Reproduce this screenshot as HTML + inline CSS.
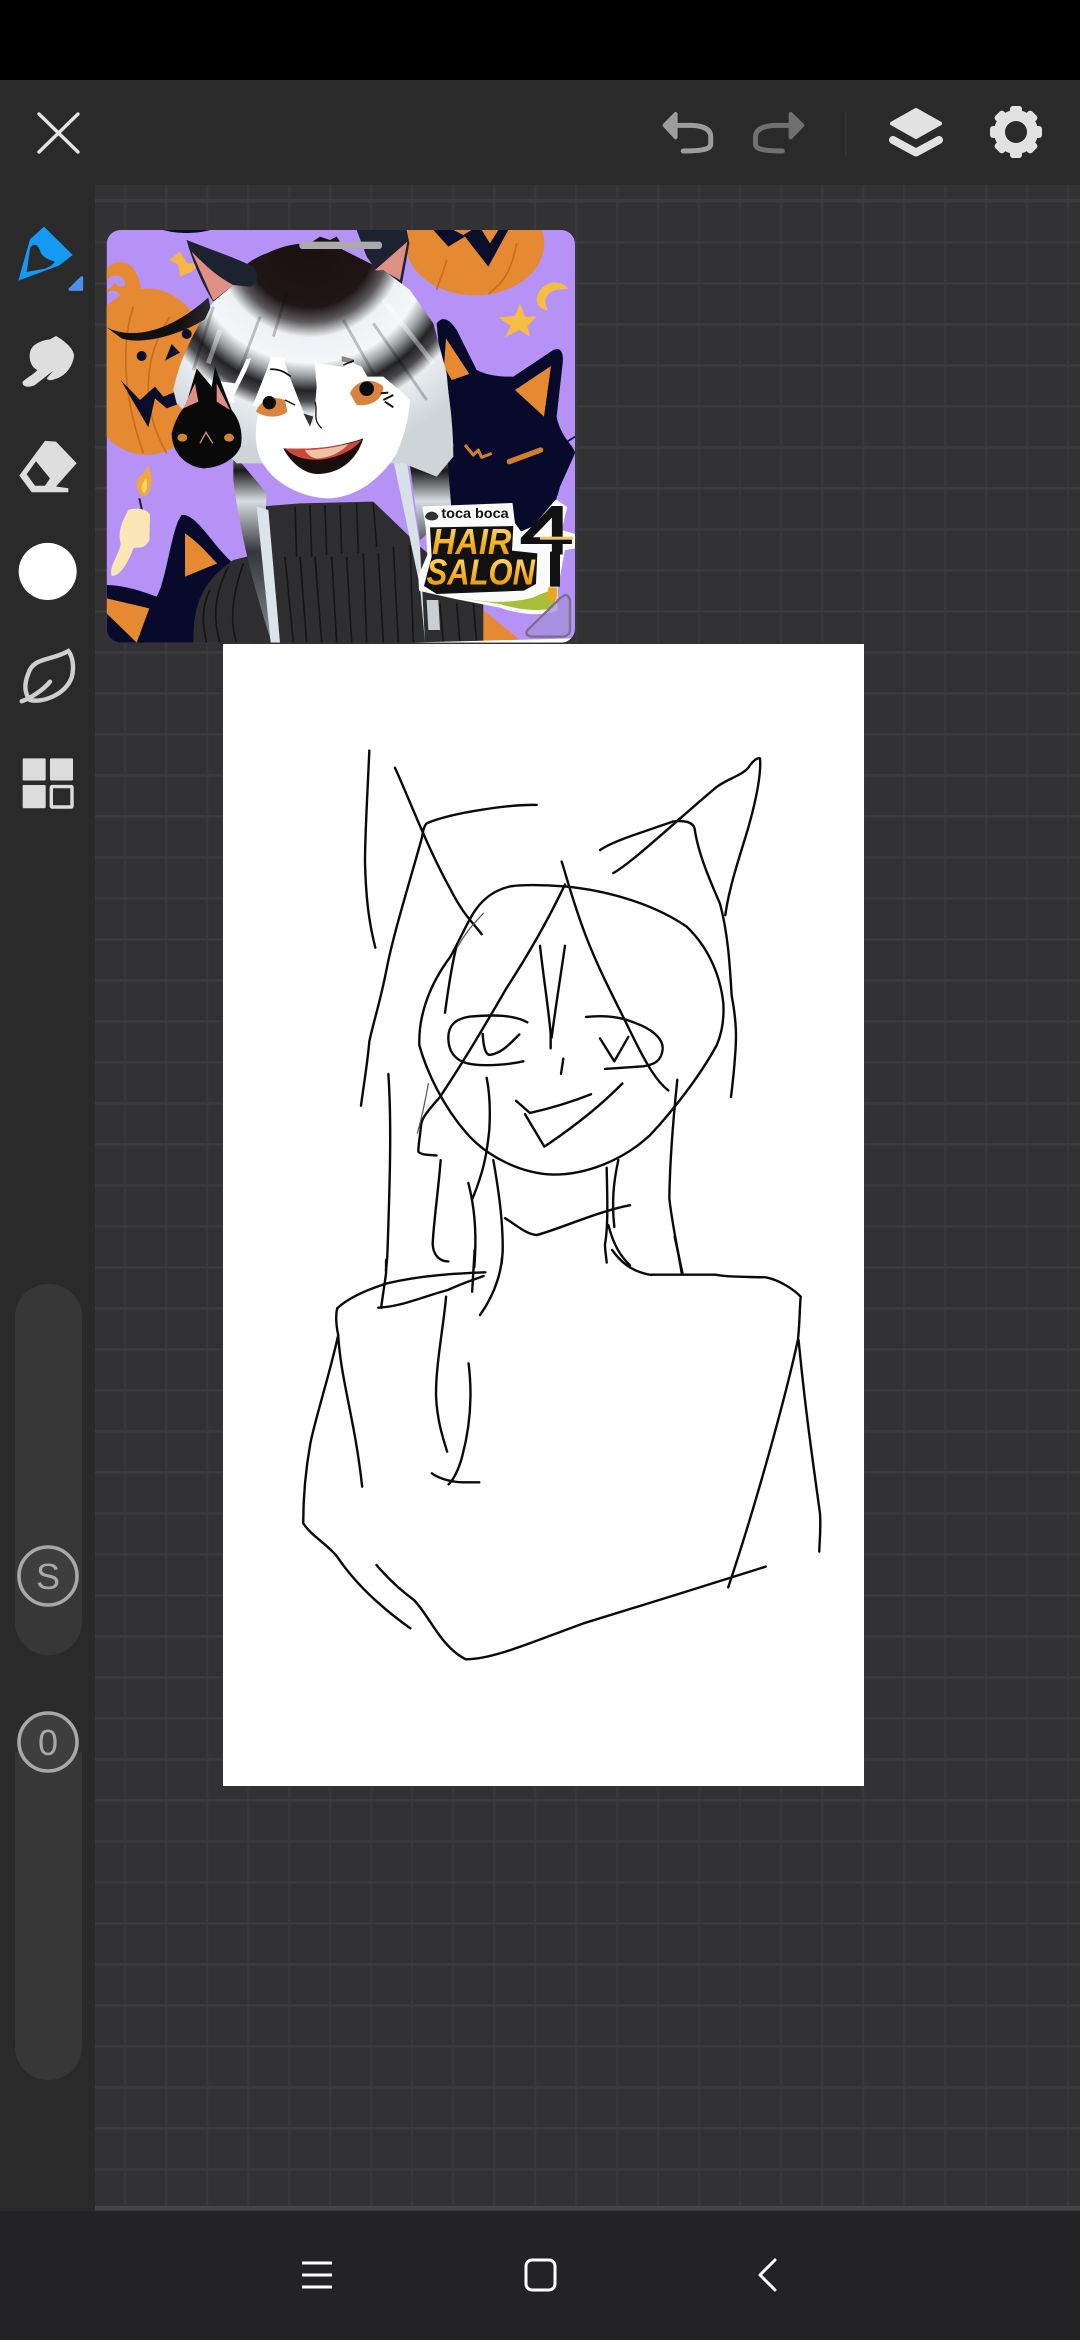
<!DOCTYPE html>
<html lang="en">
<head>
<meta charset="utf-8">
<title>Drawing canvas</title>
<style>
html,body{margin:0;padding:0;background:#000;width:1080px;height:2340px;overflow:hidden}
svg{display:block}
.s{fill:none;stroke:#0a0a0a;stroke-width:2.4;stroke-linecap:round;stroke-linejoin:round;vector-effect:non-scaling-stroke}
.t{fill:none;stroke:#555;stroke-width:1.2;stroke-linecap:round;vector-effect:non-scaling-stroke}
.ui{vector-effect:non-scaling-stroke}
</style>
</head>
<body>
<svg width="1080" height="2340" viewBox="0 0 1080 2340" xmlns="http://www.w3.org/2000/svg">
<defs>
<pattern id="grid" x="124" y="200" width="41" height="41" patternUnits="userSpaceOnUse">
<rect x="-1" y="-1" width="43" height="43" fill="#323133"/>
<rect x="0" y="0" width="2.4" height="41" fill="#38373a"/>
<rect x="0" y="0" width="41" height="2.6" fill="#3b3a3c"/>
</pattern>
<clipPath id="thumb"><rect x="20" y="30" width="1405" height="1238" rx="42"/></clipPath>
<radialGradient id="hr" gradientUnits="userSpaceOnUse" cx="420" cy="40" r="640">
<stop offset="0" stop-color="#1a1012"/><stop offset=".30" stop-color="#1f1517"/><stop offset=".37" stop-color="#5c5a5c"/><stop offset=".44" stop-color="#eef2f5"/><stop offset=".56" stop-color="#f4f7fa"/><stop offset=".62" stop-color="#9fa2a5"/><stop offset=".69" stop-color="#232325"/><stop offset=".74" stop-color="#4a4a4c"/><stop offset=".80" stop-color="#e8edf0"/><stop offset="1" stop-color="#cfd4d8"/>
</radialGradient>
<linearGradient id="hg2" gradientUnits="userSpaceOnUse" x1="0" y1="660" x2="0" y2="1270">
<stop offset="0" stop-color="#d9dde0"/><stop offset=".15" stop-color="#1a1a1a"/><stop offset=".3" stop-color="#d7dde2"/><stop offset=".55" stop-color="#33363a"/><stop offset="1" stop-color="#888c90"/>
</linearGradient>
<linearGradient id="rb" gradientUnits="userSpaceOnUse" x1="30" y1="0" x2="340" y2="0">
<stop offset="0" stop-color="#111"/><stop offset=".4" stop-color="#333"/><stop offset=".55" stop-color="#ddd"/><stop offset=".75" stop-color="#222"/><stop offset="1" stop-color="#999"/>
</linearGradient>
<linearGradient id="yl" x1="0" y1="0" x2="0" y2="1">
<stop offset="0" stop-color="#ffe38a"/><stop offset=".55" stop-color="#f6b21f"/><stop offset="1" stop-color="#df8a12"/>
</linearGradient>
</defs>

<!-- base -->
<rect width="1080" height="80" fill="#000"/>
<rect y="80" width="1080" height="2131" fill="#2a2a2b"/>
<rect x="95" y="185" width="985" height="2026" fill="url(#grid)"/>
<rect x="95" y="199" width="985" height="3" fill="#3d3c3e"/>
<rect x="95" y="2206" width="985" height="4" fill="#454446"/>
<rect y="2211" width="1080" height="129" fill="#232225"/>

<!-- top bar icons -->
<path d="M39,114 L78,152 M78,114 L39,152" fill="none" stroke="#e4e4e4" stroke-width="3.4" stroke-linecap="round"/>
<g transform="scale(.6887,.3333)">
<path d="M981,342 L965,376 L981,412 Z" fill="#9c9c9c" stroke="#9c9c9c" stroke-width="4" stroke-linejoin="round" class="ui"/>
<path d="M982,376 L1005,376 C1025,378 1032,392 1032,410 L1032,432 C1032,448 1020,453 992,453" fill="none" stroke="#9c9c9c" stroke-width="5" stroke-linecap="round" class="ui"/>
<path d="M1148,342 L1165,376 L1148,412 Z" fill="#707070" stroke="#707070" stroke-width="4" stroke-linejoin="round" class="ui"/>
<path d="M1148,376 L1125,376 C1105,378 1097,392 1097,410 L1097,432 C1097,448 1110,453 1136,453" fill="none" stroke="#707070" stroke-width="5" stroke-linecap="round" class="ui"/>
</g>
<rect x="845" y="112" width="1.6" height="44" fill="#353535"/>
<path d="M916,110 L940,123.5 L916,137 L892,123.5 Z" fill="#e2e2e2" stroke="#e2e2e2" stroke-width="4" stroke-linejoin="round"/>
<path d="M893,140 L916,152.5 L939,140" fill="none" stroke="#e2e2e2" stroke-width="8" stroke-linecap="round" stroke-linejoin="round"/>
<g transform="translate(1016,132)" fill="#e2e2e2">
<circle r="16.5" fill="none" stroke="#e2e2e2" stroke-width="11"/>
<rect x="-6" y="-26" width="12" height="52" rx="3"/>
<rect x="-6" y="-26" width="12" height="52" rx="3" transform="rotate(45)"/>
<rect x="-6" y="-26" width="12" height="52" rx="3" transform="rotate(90)"/>
<rect x="-6" y="-26" width="12" height="52" rx="3" transform="rotate(135)"/>
<circle r="11" fill="#2a2a2b"/>
</g>

<!-- sidebar tools: pen + smudge -->
<g transform="translate(0,210) scale(.33333)">
<path d="M55,212 L90,88 L132,50 L218,135 L178,166 Z" fill="#1699f2"/>
<path d="M80,186 L135,176 C145,172 160,165 164,155 C150,150 132,145 122,128 C115,100 98,98 90,116 Z" fill="#2a2a2b"/>
<path d="M210,238 L245,203 L245,238 Z" fill="#4b8fe6" stroke="#4b8fe6" stroke-width="3" stroke-linejoin="round" class="ui"/>
<path d="M68,515 C85,500 105,490 112,480 C90,470 85,440 92,420 C100,400 130,390 150,388 L168,378 C190,390 222,415 222,438 C218,470 195,500 165,507 C155,512 145,512 140,505 L160,482 L105,525 C85,535 65,530 68,515 Z" fill="#dedede"/>
</g>
<!-- sidebar tools: eraser, colour, leaf, gallery -->
<g transform="translate(0,200) scale(.3333,.4082)">
<path fill-rule="evenodd" d="M135,590 L168,592 L230,645 L168,702 L205,706 L205,716 L95,716 L58,675 Z M80,672 L108,640 L150,682 L135,700 L105,700 Z" fill="#dedede"/>
<ellipse cx="143" cy="910" rx="87" ry="70" fill="#fff"/>
<path d="M205,1105 C150,1130 100,1120 85,1160 C70,1190 75,1210 90,1225 C130,1232 195,1212 215,1170 C225,1140 215,1115 205,1105 Z" fill="none" stroke="#cfcfcf" stroke-width="4.4" class="ui"/>
<path d="M65,1228 C90,1222 130,1200 150,1180" fill="none" stroke="#cfcfcf" stroke-width="4.4" stroke-linecap="round" class="ui"/>
<rect x="68" y="1368" width="69" height="54" rx="3" fill="#dcdcdc"/>
<rect x="150" y="1368" width="69" height="54" rx="3" fill="#dcdcdc"/>
<rect x="68" y="1433" width="69" height="57" rx="3" fill="#dcdcdc"/>
<rect x="154" y="1437" width="62" height="50" rx="2" fill="none" stroke="#dcdcdc" stroke-width="3.4" class="ui"/>
</g>

<!-- sliders -->
<rect x="15" y="1284" width="67" height="371" rx="33" fill="#373738"/>
<path d="M15,1752 H82 V2047 A33,33 0 0 1 49,2080 H48 A33,33 0 0 1 15,2047 Z" fill="#373738"/>
<circle cx="48" cy="1576" r="29" fill="#3e3e3f" stroke="#a8a8a8" stroke-width="3.6"/>
<circle cx="48" cy="1742" r="29" fill="#3e3e3f" stroke="#a8a8a8" stroke-width="3.6"/>
<text x="48" y="1589" text-anchor="middle" font-family="Liberation Sans, sans-serif" font-size="36" fill="#a8a8a8">S</text>
<text x="48" y="1755" text-anchor="middle" font-family="Liberation Sans, sans-serif" font-size="36" fill="#a8a8a8">0</text>

<!-- paper -->
<rect x="223" y="644" width="641" height="1142" fill="#fff"/>

<!-- sketch upper -->
<g transform="translate(280,720) scale(.33333,.38265)">
<path class="s" d="M268,80 C262,200 255,300 255,370 C258,480 270,540 286,595"/>
<path class="s" d="M345,125 C380,190 440,330 510,440 C550,510 580,530 605,560"/>
<path class="s" d="M770,222 C700,220 520,240 440,270 C430,280 430,290 425,310 C390,420 340,560 320,650 C300,740 280,790 268,840 C262,900 250,960 243,1008"/>
<path class="s" d="M1000,400 C1060,370 1180,270 1310,175 C1340,155 1385,145 1405,125 C1415,110 1430,98 1440,100 C1445,150 1420,240 1395,310 C1370,380 1345,450 1336,510"/>
<path class="s" d="M960,340 C1000,315 1100,290 1180,265 C1210,262 1240,265 1244,285 C1255,350 1290,420 1320,480 C1345,560 1350,650 1355,720 C1370,790 1370,830 1365,880 C1362,920 1358,950 1353,985"/>
<path class="s" d="M855,435 C790,430 720,430 690,435 C640,445 600,470 570,520 C545,560 530,590 510,620 C450,690 415,770 418,850 C440,920 490,1010 560,1080 C620,1140 720,1185 820,1188 C920,1188 1030,1150 1110,1085 C1180,1020 1260,930 1310,850 C1330,810 1332,770 1330,740 C1320,660 1280,590 1220,540 C1120,480 980,445 855,435"/>
<path class="s" d="M845,370 C860,410 880,480 920,570 C960,660 1010,740 1060,830 C1100,900 1130,945 1165,968"/>
<path class="s" d="M855,430 C800,530 740,620 680,700 C620,790 560,880 480,985 C440,1025 425,1040 423,1060 C420,1090 415,1110 415,1128 C425,1138 450,1136 470,1138"/>
<path class="s" d="M530,590 C515,640 505,700 495,765"/>
<path class="t" d="M610,505 C585,530 560,550 535,590"/>
<path class="s" d="M742,790 C700,770 640,770 570,775 C530,780 505,795 505,830 C505,870 530,895 580,900 C630,905 690,900 730,892"/>
<path class="s" d="M608,820 C610,850 615,875 630,875 C670,870 695,840 718,822"/>
<path class="s" d="M918,776 C960,772 1010,772 1060,790 C1110,805 1150,830 1148,860 C1145,890 1125,900 1090,905 L975,912"/>
<path class="s" d="M960,832 L1003,892 L1045,828"/>
<path class="s" d="M780,590 C790,670 805,750 812,820 L812,858"/>
<path class="s" d="M855,590 C840,680 825,760 815,830"/>
<path class="s" d="M850,885 L843,925"/>
<path class="s" d="M708,995 L750,1027 C810,1015 870,1000 933,978"/>
<path class="s" d="M735,1030 L793,1115 C870,1070 960,1010 1027,950"/>
<path class="s" d="M620,935 C628,970 632,1010 628,1070 C620,1140 610,1180 578,1250"/>
<path class="t" d="M445,950 C435,1000 425,1040 412,1080"/>
<path class="s" d="M325,925 C335,1050 330,1200 322,1400 L318,1440"/>
<path class="s" d="M482,1150 C475,1230 460,1320 458,1370 C460,1400 480,1415 505,1415"/>
<path class="s" d="M565,1210 C580,1260 590,1320 585,1400 L583,1430"/>
<path class="s" d="M640,1150 C650,1200 670,1300 668,1390 L665,1420"/>
<path class="s" d="M675,1302 C710,1320 740,1345 770,1346 C840,1330 950,1285 1050,1268"/>
<path class="s" d="M980,1170 C982,1250 985,1320 975,1370 C975,1390 980,1410 980,1418"/>
<path class="s" d="M1015,1150 C1000,1210 995,1260 1003,1325"/>
<path class="s" d="M985,1320 C1000,1370 1020,1400 1050,1425"/>
<path class="s" d="M1192,940 C1185,1000 1170,1120 1168,1250 C1175,1310 1195,1390 1205,1445"/>
</g>

<!-- sketch lower -->
<g transform="translate(280,1240) scale(.35714,.33333)">
<path class="s" d="M575,97 C500,100 400,105 300,130 C240,150 190,175 160,205 C155,230 158,260 163,285 C170,420 210,540 230,740"/>
<path class="s" d="M163,285 C140,400 100,530 85,610 C70,700 65,790 65,850 C90,890 130,910 160,950 C210,1030 280,1100 365,1165"/>
<path class="s" d="M270,975 C290,1000 330,1045 375,1080 C420,1130 450,1220 520,1258 C600,1258 720,1200 850,1150 C1000,1100 1200,1035 1360,980"/>
<path class="s" d="M275,203 C340,200 400,170 470,150 C510,130 540,120 570,108"/>
<path class="s" d="M465,170 C458,260 435,380 437,470 C440,540 455,590 468,635"/>
<path class="s" d="M528,370 C535,430 540,530 510,650 C500,690 485,720 472,733"/>
<path class="s" d="M425,700 C440,712 470,725 510,727 L558,727"/>
<path class="s" d="M1458,170 C1455,200 1455,260 1450,300 C1420,450 1340,770 1255,1042"/>
<path class="s" d="M1452,300 C1470,500 1490,650 1512,820 C1515,870 1510,910 1510,935"/>
<path class="s" d="M1040,104 L1220,104 C1260,112 1300,110 1360,112 C1400,120 1440,150 1458,170"/>
<path class="s" d="M297,60 L297,100 L283,203"/>
<path class="s" d="M545,30 L538,155"/>
<path class="s" d="M622,50 C620,80 610,150 560,225"/>
<path class="s" d="M930,30 C950,60 980,95 1040,105"/>
<path class="s" d="M1105,-10 L1127,100"/>
</g>

<!-- reference thumbnail -->
<g transform="translate(100,220) scale(.33333)">
<g clip-path="url(#thumb)">
<rect x="20" y="30" width="1405" height="1238" fill="#b692f7"/>
<!-- top right pumpkin -->
<ellipse cx="1125" cy="70" rx="208" ry="156" fill="#e58a32"/>
<path d="M1000,30 L1045,80 L1095,50 L1165,140 L1225,30 Z" fill="#0a0e2c"/>
<path d="M1060,30 L1090,45 L1115,30 Z M1145,30 L1170,70 L1195,30 Z" fill="#e58a32"/>
<path d="M1040,120 C1025,170 1015,190 1010,210 M1250,70 C1235,150 1210,190 1165,222" fill="none" stroke="#c96d1f" stroke-width="5"/>
<path d="M190,30 C230,42 290,42 330,30 Z" fill="#0a0e2c"/>
<!-- left pumpkin -->
<ellipse cx="140" cy="455" rx="195" ry="250" fill="#e58a32"/>
<path d="M20,215 C35,200 60,210 66,230 C80,250 110,240 118,215 C118,170 95,130 60,130 C30,130 20,150 20,175 C45,150 80,165 80,195 C65,210 50,205 45,190" fill="#e58a32" stroke="#e58a32" stroke-width="8"/>
<path d="M100,260 C70,350 60,500 130,700 M210,290 C130,410 120,560 200,700" fill="none" stroke="#c96d1f" stroke-width="5"/>
<circle cx="125" cy="408" r="15" fill="#0a0e2c"/>
<circle cx="260" cy="342" r="15" fill="#0a0e2c"/>
<path d="M215,372 L240,398 L195,422 Z" fill="#0a0e2c"/>
<path d="M62,480 L120,540 L165,500 L190,530 L240,510 L240,550 L200,565 L165,535 L145,622 Z" fill="#0a0e2c"/>
<!-- stars + moon -->
<path d="M240,95 L262,130 L300,130 L275,155 L240,170 L235,135 L208,120 Z" fill="#f4b842"/>
<path d="M1260,250 L1275,290 L1310,290 L1282,318 L1290,350 L1258,330 L1215,352 L1232,318 L1195,292 L1245,288 Z" fill="#f7bd42"/>
<path d="M1405,205 C1370,170 1315,190 1310,240 C1312,260 1330,270 1345,272 C1330,250 1335,225 1355,215 C1375,205 1395,210 1405,205 Z" fill="#f7bd42"/>
<!-- right cat -->
<path d="M1010,310 C1030,285 1050,300 1070,330 L1130,450 C1170,470 1210,470 1240,470 L1360,390 C1380,380 1392,395 1388,430 L1370,590 C1380,650 1425,680 1425,700 L1380,800 C1360,880 1300,1010 1240,1040 L1000,1040 L1000,700 L1040,620 Z" fill="#070a2a"/>
<path d="M1038,355 L1108,462 L1055,480 L1032,440 Z" fill="#e58a32"/>
<path d="M1353,438 L1332,590 L1245,510 Z" fill="#e58a32"/>
<path d="M1370,685 L1425,650 M1372,705 L1425,695" stroke="#070a2a" stroke-width="5" fill="none"/>
<path d="M1095,675 L1120,705 L1135,690 L1145,712 L1175,700" fill="none" stroke="#d17f2c" stroke-width="9" stroke-linejoin="round"/>
<path d="M1228,725 L1322,690" fill="none" stroke="#d17f2c" stroke-width="16" stroke-linecap="round"/>
<!-- candle -->
<path d="M128,880 L118,835" stroke="#222" stroke-width="6"/>
<path d="M145,735 C155,770 165,800 135,830 C115,830 100,790 118,770 C130,760 140,750 145,735 Z" fill="#f0a83a"/>
<path d="M138,775 C145,800 140,815 132,820 C120,810 125,790 138,775 Z" fill="#fbd46a"/>
<path d="M85,870 C115,860 145,870 150,885 L148,960 C135,990 110,980 100,985 C80,1040 55,1070 35,1068 C25,1040 60,1000 62,970 C50,930 75,890 85,870 Z" fill="#fbe6b5"/>
<!-- bottom-left cat -->
<path d="M20,1095 C70,1095 130,1115 170,1130 C200,1080 215,920 245,885 C290,880 340,980 400,1030 L420,1268 L20,1268 Z" fill="#070a2a"/>
<path d="M255,940 C300,970 330,1010 352,1030 L255,1070 Z" fill="#e58a32"/>
<path d="M20,1135 L148,1165 L110,1268 L20,1180 Z" fill="#e58a32"/>
<path d="M1150,1170 L1270,1268 L1150,1268 Z" fill="#e58a32"/>
<!-- sweater -->
<path d="M480,860 L600,850 L820,845 L960,980 L1150,1140 L1150,1268 L280,1268 C280,1160 300,1090 400,1020 L480,1000 Z" fill="#2e2e30"/>
<path d="M585,860 L590,1010 M630,855 L635,1010 M675,855 L680,1005 M720,855 L725,1000 M770,850 L775,1000 M820,850 L830,980 M510,1010 L530,1268 M555,1010 L580,1268 M600,1010 L620,1268 M645,1010 L665,1268 M695,1010 L710,1268 M740,1010 L755,1268 M790,1000 L800,1268 M835,1000 L850,1268 M880,980 L895,1268 M930,975 L940,1268 M1020,1150 L1030,1268 M1070,1150 L1080,1268 M1120,1150 L1130,1268 M385,1040 C340,1130 340,1200 360,1268 M430,1030 C395,1130 390,1210 410,1268 M330,1110 C300,1170 310,1230 320,1268" fill="none" stroke="#151516" stroke-width="5"/>
<path d="M980,1140 L1015,1140 L1020,1230 L985,1230 Z" fill="#c9ced2"/>
<!-- long hair behind -->
<path d="M400,700 L500,820 L490,1000 L540,1268 L515,1268 C470,1130 420,950 400,780 Z" fill="url(#hg2)"/>
<path d="M470,860 L505,870 L540,1268 L512,1268 Z" fill="#dce3e9"/>
<path d="M880,720 L920,720 L960,980 L975,1268 L960,1100 Z" fill="#d9e1e8"/>
<path d="M925,700 L1040,680 L1055,880 L960,960 Z" fill="url(#hg2)"/>

<!-- hair (drawn in head-local coords) -->
<g transform="translate(210,30)">
<path d="M130,215 C170,150 230,90 290,70 C350,40 420,30 500,50 L620,110 C700,170 760,240 800,330 C830,420 850,560 850,680 L800,740 L700,700 L200,700 L20,520 L10,480 C30,380 80,290 130,215 Z" fill="url(#hr)"/>
<path d="M420,40 L450,20 L480,30 L500,20 L520,50 L440,60 Z" fill="#1a1012"/>
<!-- ribbon -->
<path d="M-190,292 C-90,340 30,280 115,202 L125,255 C30,320 -90,345 -145,325 Z" fill="url(#rb)"/>
<!-- ears -->
<path d="M50,30 C100,50 200,85 250,110 C270,130 262,165 240,170 L190,165 L130,215 C100,170 65,90 50,30 Z" fill="#1c2230"/>
<path d="M65,65 L130,212 L190,165 C140,140 100,100 65,65 Z" fill="#dd9083"/>
<path d="M560,0 L710,0 L718,40 L695,165 L655,130 L615,115 L590,80 Z" fill="#1c2230"/>
<path d="M615,120 L712,35 L690,150 L655,130 Z" fill="#dd9083"/>
<!-- face -->
<path d="M70,530 C170,400 280,400 380,420 L720,470 C725,550 715,620 680,700 C630,780 560,830 480,835 C390,835 290,780 265,700 C250,650 260,600 270,560 Z" fill="#fff" transform="translate(0,-30)"/>
<!-- bangs -->
<path d="M125,225 L180,225 L110,450 L60,520 L20,480 L60,360 Z" fill="url(#hr)"/>
<path d="M180,235 L300,240 L195,460 L120,450 Z" fill="url(#hr)"/>
<path d="M300,240 L360,165 L385,190 L320,330 L290,420 L215,610 L190,500 L230,420 Z" fill="url(#hr)"/>
<path d="M365,190 L420,230 L440,470 L430,590 L400,545 L355,430 L345,400 Z" fill="url(#hr)"/>
<path d="M340,150 L640,120 L720,180 L790,280 L830,430 L850,650 L790,580 L700,490 L640,440 L585,440 L515,380 L480,370 L430,240 Z" fill="url(#hr)"/>
<path d="M130,230 L70,420 M270,260 L210,420 M350,190 L310,320 M520,270 L610,430 M610,280 L770,510" fill="none" stroke="#000" stroke-opacity=".22" stroke-width="9"/>
<path d="M640,210 L790,400 M150,300 L115,400" fill="none" stroke="#fff" stroke-opacity=".4" stroke-width="14"/>
<path d="M515,385 L575,410 L592,440 L540,480 Z" fill="#fff"/>
<path d="M515,378 L552,388 L545,400 L515,395 Z" fill="#888"/>
<!-- eyes -->
<path d="M258,545 C270,510 310,495 345,510 L352,545 C330,565 285,565 258,545 Z" fill="#d9843d"/>
<circle cx="298" cy="518" r="20" fill="#0c0c0c"/>
<path d="M300,418 C325,416 345,425 362,440" fill="none" stroke="#111" stroke-width="5"/>
<path d="M345,510 C355,515 365,520 375,525" fill="none" stroke="#111" stroke-width="4"/>
<path d="M540,490 C555,450 610,440 640,470 C640,510 600,530 560,525 Z" fill="#d9843d"/>
<circle cx="590" cy="476" r="22" fill="#0c0c0c"/>
<path d="M520,405 L552,392" stroke="#111" stroke-width="5"/>
<path d="M640,510 L670,495 M645,515 L670,532 M632,490 L655,488" fill="none" stroke="#111" stroke-width="6"/>
<path d="M435,515 C445,550 425,565 455,595" fill="none" stroke="#111" stroke-width="4"/>
<path d="M400,550 L420,590 L430,560 Z" fill="#333"/>
</g>

<!-- mouth -->
<path d="M550,685 C640,690 720,680 790,655 C770,720 720,762 650,762 C610,760 570,725 550,685 Z" fill="#1c0d0d"/>
<path d="M555,685 C640,690 720,680 785,660 C760,690 720,710 670,718 C620,722 580,712 555,685 Z" fill="#cc4a35"/>
<path d="M615,690 C670,690 710,680 745,672 C720,700 690,712 650,716 C630,712 620,700 615,690 Z" fill="#eec2a5"/>
<!-- mini cat -->
<path d="M215,640 C225,600 240,575 258,555 L290,445 L335,500 L345,440 L395,570 C420,600 430,640 422,680 C400,730 340,745 310,745 C260,740 215,700 215,640 Z" fill="#090909"/>
<path d="M285,490 L250,565 L295,545 Z M350,490 L350,545 L390,570 Z" fill="#dd9083"/>
<ellipse cx="247" cy="653" rx="15" ry="12" fill="#cf8432"/>
<ellipse cx="387" cy="653" rx="15" ry="12" fill="#cf8432"/>
<path d="M300,670 L318,637 L338,670" fill="none" stroke="#dd9083" stroke-width="4"/>

<!-- logo -->
<g transform="translate(900,810)">
<path d="M70,52 L335,42 L342,100 L362,128 L400,112 L468,32 L498,52 L482,122 L525,135 L525,172 L492,178 L470,300 L470,360 C420,378 350,368 300,350 L170,325 L60,300 L58,258 L85,195 L80,110 Z" fill="#fbfbfb" stroke="#fbfbfb" stroke-width="6" stroke-linejoin="round"/>
<path d="M90,112 L340,108 L336,182 L412,190 L408,282 L372,302 L110,312 L72,288 L95,200 Z" fill="#111"/>
<path d="M180,322 C250,338 330,342 400,322 C430,308 455,298 470,302 L462,352 C420,368 350,358 300,342 C260,335 220,332 180,322 Z" fill="#a7bf3a"/>
<path d="M75,80 C80,60 110,60 115,80 C112,95 80,95 75,80 Z" fill="#333"/>
<text x="124" y="84" font-family="Liberation Sans, sans-serif" font-weight="700" font-size="42" fill="#111" textLength="202" lengthAdjust="spacingAndGlyphs">toca boca</text>
<text x="96" y="192" font-family="Liberation Sans, sans-serif" font-weight="700" font-style="italic" font-size="108" fill="url(#yl)" textLength="238" lengthAdjust="spacingAndGlyphs">HAIR</text>
<text x="80" y="284" font-family="Liberation Sans, sans-serif" font-weight="700" font-style="italic" font-size="108" fill="url(#yl)" textLength="325" lengthAdjust="spacingAndGlyphs">SALON</text>
<text x="360" y="191" font-family="Liberation Sans, sans-serif" font-size="204" fill="#111" stroke="#111" stroke-width="6" textLength="160" lengthAdjust="spacingAndGlyphs">4</text>
<rect x="450" y="185" width="30" height="105" fill="#111"/>
<path d="M445,292 L472,292 L470,330 L440,335 Z" fill="#e8a71f"/>
<rect x="420" y="140" width="100" height="9" fill="#f0c766"/>
<!-- selection handle -->
<path d="M495,315 C505,315 510,325 510,335 L510,420 C510,435 495,440 485,440 L395,440 C378,438 375,428 385,418 L480,325 Z" fill="#a58fda" fill-opacity=".75" stroke="#7b7088" stroke-width="7"/>
</g>
<path d="M930,1268 L1425,1255 L1425,1268 Z" fill="#fff"/>
</g>
<rect x="598" y="65" width="248" height="22" rx="9" fill="#aaa9ad"/>
</g>

<!-- nav bar -->
<path d="M302,2263 H332 M302,2275 H332 M302,2287 H332" stroke="#fff" stroke-width="3" fill="none"/>
<rect x="526" y="2260" width="29" height="30" rx="6" fill="none" stroke="#fff" stroke-width="3"/>
<path d="M775,2260 L760,2275 L775,2290" fill="none" stroke="#fff" stroke-width="3" stroke-linecap="round" stroke-linejoin="round"/>
</svg>
</body>
</html>
